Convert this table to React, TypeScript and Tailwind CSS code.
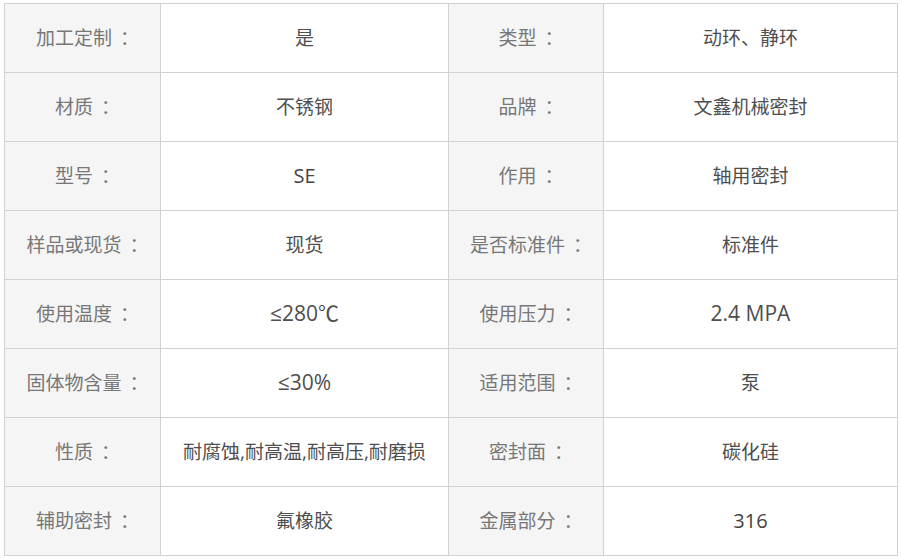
const rows: [string, string, string, string][] = [
  ['加工定制', '是', '类型', '动环、静环'],
  ['材质', '不锈钢', '品牌', '文鑫机械密封'],
  ['型号', 'SE', '作用', '轴用密封'],
  ['样品或现货', '现货', '是否标准件', '标准件'],
  ['使用温度', '≤280℃', '使用压力', '2.4 MPA'],
  ['固体物含量', '≤30%', '适用范围', '泵'],
  ['性质', '耐腐蚀,耐高温,耐高压,耐磨损', '密封面', '碳化硅'],
  ['辅助密封', '氟橡胶', '金属部分', '316'],
];

const big = ['≤280℃', '≤30%', '2.4 MPA'];
const latin = ['SE', '316'];

function valueClass(v: string) {
  if (big.includes(v)) return 'text-[21px]';
  if (latin.includes(v)) return 'text-[20px] text-[#444]';
  return 'text-[19px]';
}

function Label({ text }: { text: string }) {
  return (
    <td className="border border-[#d2d2d2] bg-[#f5f5f5] pl-[10px] text-center text-[19px] text-[#777]">
      {text}
      <span className="ml-[8px]">：</span>
    </td>
  );
}

export default function App() {
  return (
    <div className="min-h-[560px] w-[902px] bg-white pl-[4px] pt-[3px] font-['Open_Sans','Noto_Sans_CJK_SC',sans-serif]">
      <table className="w-[893px] table-fixed border-collapse border border-[#d2d2d2]">
        <colgroup>
          <col className="w-[156px]" />
          <col className="w-[288px]" />
          <col className="w-[155px]" />
          <col className="w-[294px]" />
        </colgroup>
        <tbody>
          {rows.map(([l1, v1, l2, v2]) => (
            <tr key={l1} className="h-[69px]">
              <Label text={l1} />
              <td className={`border border-[#d2d2d2] text-center text-[#4e4e4e] ${valueClass(v1)}`}>
                {v1}
              </td>
              <Label text={l2} />
              <td className={`border border-[#d2d2d2] text-center text-[#4e4e4e] ${valueClass(v2)}`}>
                {v2}
              </td>
            </tr>
          ))}
        </tbody>
      </table>
    </div>
  );
}
